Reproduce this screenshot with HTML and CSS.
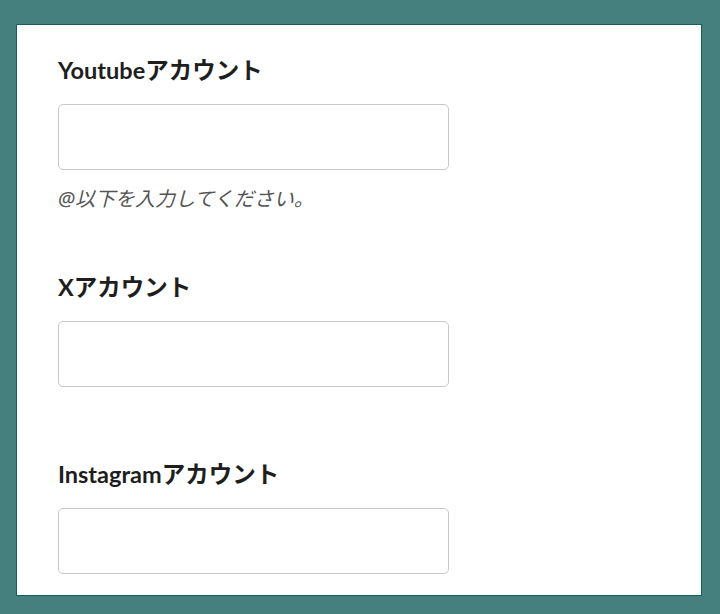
FILE: index.html
```html
<!DOCTYPE html>
<html lang="ja">
<head>
    <meta charset="UTF-8">
    <meta name="viewport" content="width=device-width, initial-scale=1.0">
    <title>SNSアカウント</title>
    <link rel="stylesheet" href="styles.css">
</head>
<body>
    <form class="card">
        <div class="field">
            <label class="field-label" for="youtube">Youtubeアカウント</label>
            <input id="youtube" class="field-input" type="text">
            <p class="field-help">@以下を入力してください。</p>
        </div>
        <div class="field">
            <label class="field-label" for="x">Xアカウント</label>
            <input id="x" class="field-input" type="text">
        </div>
        <div class="field last">
            <label class="field-label" for="instagram">Instagramアカウント</label>
            <input id="instagram" class="field-input" type="text">
        </div>
    </form>
</body>
</html>
```

FILE: styles.css
```css
body {
    background-color: #45807e;
    margin: 0;
    padding: 24px 18px 18px 16px;
    font-family: "Lato", "Noto Sans CJK JP", sans-serif;
    color: #222222;
}

.card {
    background-color: #ffffff;
    border: 1px solid #15605c;
    padding: 29px 42px 8px 41px;
    height: 572px;
    box-sizing: border-box;
}

.field {
    display: flex;
    flex-direction: column;
    align-items: flex-start;
    margin-bottom: 59px;
}

.field.last {
    margin-bottom: 0;
}

.field-label {
    display: block;
    font-size: 23.5px;
    font-weight: bold;
    line-height: 32px;
    margin-bottom: 18px;
    color: #1e1e1e;
}

.field-input {
    display: block;
    width: 391px;
    height: 66px;
    box-sizing: border-box;
    border: 1px solid #c8c8c8;
    border-radius: 5px;
    margin: 0 0 12px 0;
    padding: 0 12px;
    font-size: 18px;
}

.field-help {
    margin: 4px 0 0 0;
    font-family: "Noto Sans", "Noto Sans CJK JP", sans-serif;
    font-size: 20px;
    line-height: 26px;
    font-style: italic;
    color: #555555;
}
```
